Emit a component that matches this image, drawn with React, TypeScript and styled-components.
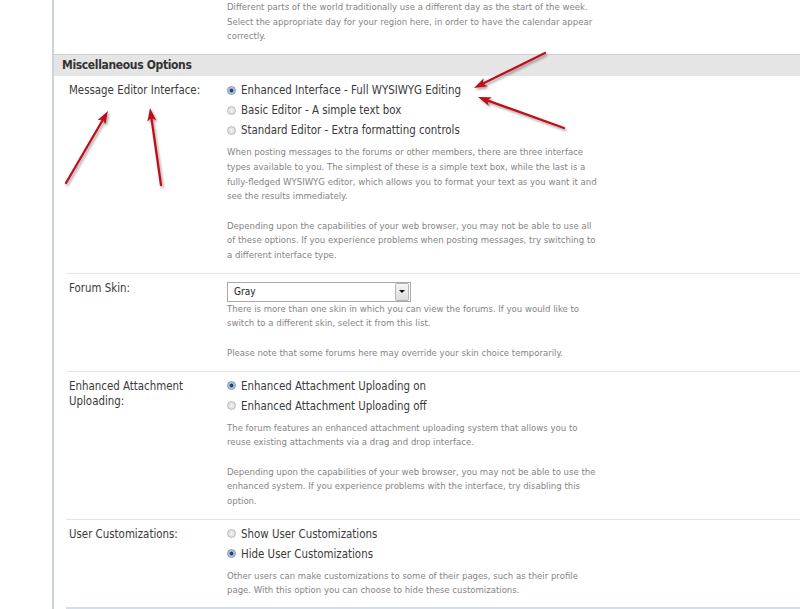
import React from 'react'
import styled, { createGlobalStyle } from 'styled-components'

const GlobalStyle = createGlobalStyle`
  html, body {
    margin: 0;
    padding: 0;
    background: #ffffff;
  }
  body {
    font-family: 'DejaVu Sans Condensed', 'Liberation Sans', sans-serif;
    color: #333333;
    overflow: hidden;
  }
`

type Option = { label: string; checked?: boolean }

const topHelp: string[][] = [
  [
    'Different parts of the world traditionally use a different day as the start of the week.',
    'Select the appropriate day for your region here, in order to have the calendar appear',
    'correctly.',
  ],
]

const editorHelp: string[][] = [
  [
    'When posting messages to the forums or other members, there are three interface',
    'types available to you. The simplest of these is a simple text box, while the last is a',
    'fully-fledged WYSIWYG editor, which allows you to format your text as you want it and',
    'see the results immediately.',
  ],
  [
    'Depending upon the capabilities of your web browser, you may not be able to use all',
    'of these options. If you experience problems when posting messages, try switching to',
    'a different interface type.',
  ],
]

const skinHelp: string[][] = [
  [
    'There is more than one skin in which you can view the forums. If you would like to',
    'switch to a different skin, select it from this list.',
  ],
  ['Please note that some forums here may override your skin choice temporarily.'],
]

const attachHelp: string[][] = [
  [
    'The forum features an enhanced attachment uploading system that allows you to',
    'reuse existing attachments via a drag and drop interface.',
  ],
  [
    'Depending upon the capabilities of your web browser, you may not be able to use the',
    'enhanced system. If you experience problems with the interface, try disabling this',
    'option.',
  ],
]

const customHelp: string[][] = [
  [
    'Other users can make customizations to some of their pages, such as their profile',
    'page. With this option you can choose to hide these customizations.',
  ],
]

const App: React.FC = () => {
  return (
    <>
      <GlobalStyle />
      <Frame>
        <Row $top>
          <Label />
          <Value>
            <Help paragraphs={topHelp} />
          </Value>
        </Row>

        <SectionHeader>Miscellaneous Options</SectionHeader>

        <Row>
          <Label>Message Editor Interface:</Label>
          <Value>
            <RadioGroup
              options={[
                { label: 'Enhanced Interface - Full WYSIWYG Editing', checked: true },
                { label: 'Basic Editor - A simple text box' },
                { label: 'Standard Editor - Extra formatting controls' },
              ]}
            />
            <Help paragraphs={editorHelp} />
          </Value>
        </Row>

        <Row>
          <Label>Forum Skin:</Label>
          <Value>
            <Select>
              <SelectText>Gray</SelectText>
              <SelectButton>
                <Caret />
              </SelectButton>
            </Select>
            <Help paragraphs={skinHelp} />
          </Value>
        </Row>

        <Row>
          <Label>
            Enhanced Attachment
            <br />
            Uploading:
          </Label>
          <Value>
            <RadioGroup
              options={[
                { label: 'Enhanced Attachment Uploading on', checked: true },
                { label: 'Enhanced Attachment Uploading off' },
              ]}
            />
            <Help paragraphs={attachHelp} />
          </Value>
        </Row>

        <Row $last>
          <Label>User Customizations:</Label>
          <Value>
            <RadioGroup
              options={[
                { label: 'Show User Customizations' },
                { label: 'Hide User Customizations', checked: true },
              ]}
            />
            <Help paragraphs={customHelp} />
          </Value>
        </Row>
      </Frame>
      <Arrows />
    </>
  )
}

export default App

const RadioGroup = ({ options }: { options: Option[] }) => (
  <Radios>
    {options.map((o) => (
      <RadioRow key={o.label}>
        <RadioDot $checked={!!o.checked} />
        {o.label}
      </RadioRow>
    ))}
  </Radios>
)

const Help = ({ paragraphs }: { paragraphs: string[][] }) => (
  <HelpText>
    {paragraphs.map((p, i) => (
      <HelpPara key={i}>
        {p.map((line) => (
          <HelpLine key={line}>{line}</HelpLine>
        ))}
      </HelpPara>
    ))}
  </HelpText>
)

// red callout arrows pasted over the screenshot
const arrows = [
  { x1: 545, y1: 53, x2: 474, y2: 88 },
  { x1: 564, y1: 128, x2: 478, y2: 97 },
  { x1: 66, y1: 183, x2: 108, y2: 111 },
  { x1: 161, y1: 185, x2: 150, y2: 108 },
]

const Arrows = () => (
  <Overlay width="800" height="609" viewBox="0 0 800 609">
    <defs>
      <filter id="shade" x="-20%" y="-20%" width="140%" height="140%">
        <feDropShadow dx="1.5" dy="2" stdDeviation="1.2" floodColor="#000" floodOpacity="0.35" />
      </filter>
    </defs>
    <g filter="url(#shade)">
      {arrows.map((a, i) => {
        const dx = a.x2 - a.x1
        const dy = a.y2 - a.y1
        const len = Math.hypot(dx, dy)
        const ux = dx / len
        const uy = dy / len
        const hl = 13
        const hw = 4.5
        const bx = a.x2 - ux * hl
        const by = a.y2 - uy * hl
        const pts = `${a.x2},${a.y2} ${bx - uy * hw},${by + ux * hw} ${bx + ux * 3},${by + uy * 3} ${bx + uy * hw},${by - ux * hw}`
        return (
          <g key={i}>
            <line x1={a.x1} y1={a.y1} x2={bx + ux * 4} y2={by + uy * 4} stroke="#c0101a" strokeWidth="2.3" strokeLinecap="round" />
            <polygon points={pts} fill="#c0101a" />
          </g>
        )
      })}
    </g>
  </Overlay>
)

const Overlay = styled.svg`
  position: absolute;
  top: 0;
  left: 0;
  pointer-events: none;
`

const Frame = styled.div`
  margin-left: 52px;
  border-left: 2px solid #c9d4df;
  min-height: 609px;
`

const Row = styled.div<{ $top?: boolean; $last?: boolean }>`
  display: grid;
  grid-template-columns: 161px 1fr;
  margin-left: 12px;
  padding: ${({ $top, $last }) => ($top ? '0 0 10px' : $last ? '4px 0 9px' : '4px 0 10px')};
  border-bottom: ${({ $top, $last }) =>
    $top ? 'none' : $last ? '2px solid #d3deea' : '1px solid #dfe6ec'};
`

const Label = styled.div`
  padding: 3px 0 0 3px;
  font-size: 11.4px;
  line-height: 15px;
  color: #3a3a3a;
`

const Value = styled.div`
  display: flex;
  flex-direction: column;
  align-items: flex-start;
`

const SectionHeader = styled.div`
  height: 21px;
  border-top: 1px solid #d0d0d0;
  background: #e5e5e5;
  padding-left: 8px;
  font-size: 12px;
  font-weight: bold;
  letter-spacing: -0.35px;
  line-height: 21px;
  color: #333333;
`

const Radios = styled.div`
  display: flex;
  flex-direction: column;
  margin-bottom: 5px;
`

const RadioRow = styled.div`
  display: flex;
  align-items: center;
  gap: 5px;
  height: 20px;
  font-size: 11.4px;
  color: #3a3a3a;
  white-space: nowrap;
`

const RadioDot = styled.span<{ $checked: boolean }>`
  box-sizing: border-box;
  width: 9px;
  height: 9px;
  border-radius: 50%;
  border: 1px solid ${({ $checked }) => ($checked ? '#7f97b3' : '#b9b9b9')};
  background: ${({ $checked }) =>
    $checked
      ? 'radial-gradient(circle, #27476f 0 1.6px, #9fb5cf 2.2px, #e9eef4 100%)'
      : 'radial-gradient(circle, #f2f2f2 0, #d6d6d6 100%)'};
`

const HelpText = styled.div`
  display: flex;
  flex-direction: column;
  gap: 14.7px;
  font-size: 9.5px;
  line-height: 14.7px;
  color: #858585;
`

const HelpPara = styled.div`
  display: flex;
  flex-direction: column;
`

const HelpLine = styled.span`
  white-space: nowrap;
`

const Select = styled.div`
  box-sizing: border-box;
  display: flex;
  align-items: center;
  width: 184px;
  height: 20px;
  margin-top: 4px;
  border: 1px solid #a9a9a9;
  background: #ffffff;
`

const SelectText = styled.span`
  flex: 1;
  padding-left: 6px;
  font-size: 10px;
  color: #222222;
`

const SelectButton = styled.span`
  box-sizing: border-box;
  display: flex;
  align-items: center;
  justify-content: center;
  width: 14px;
  height: 18px;
  margin-right: 1px;
  border: 1px solid #b4b4b4;
  border-radius: 2px;
  background: linear-gradient(#f6f6f6, #dcdcdc);
`

const Caret = styled.span`
  width: 0;
  height: 0;
  border-left: 3px solid transparent;
  border-right: 3px solid transparent;
  border-top: 3px solid #111111;
`
